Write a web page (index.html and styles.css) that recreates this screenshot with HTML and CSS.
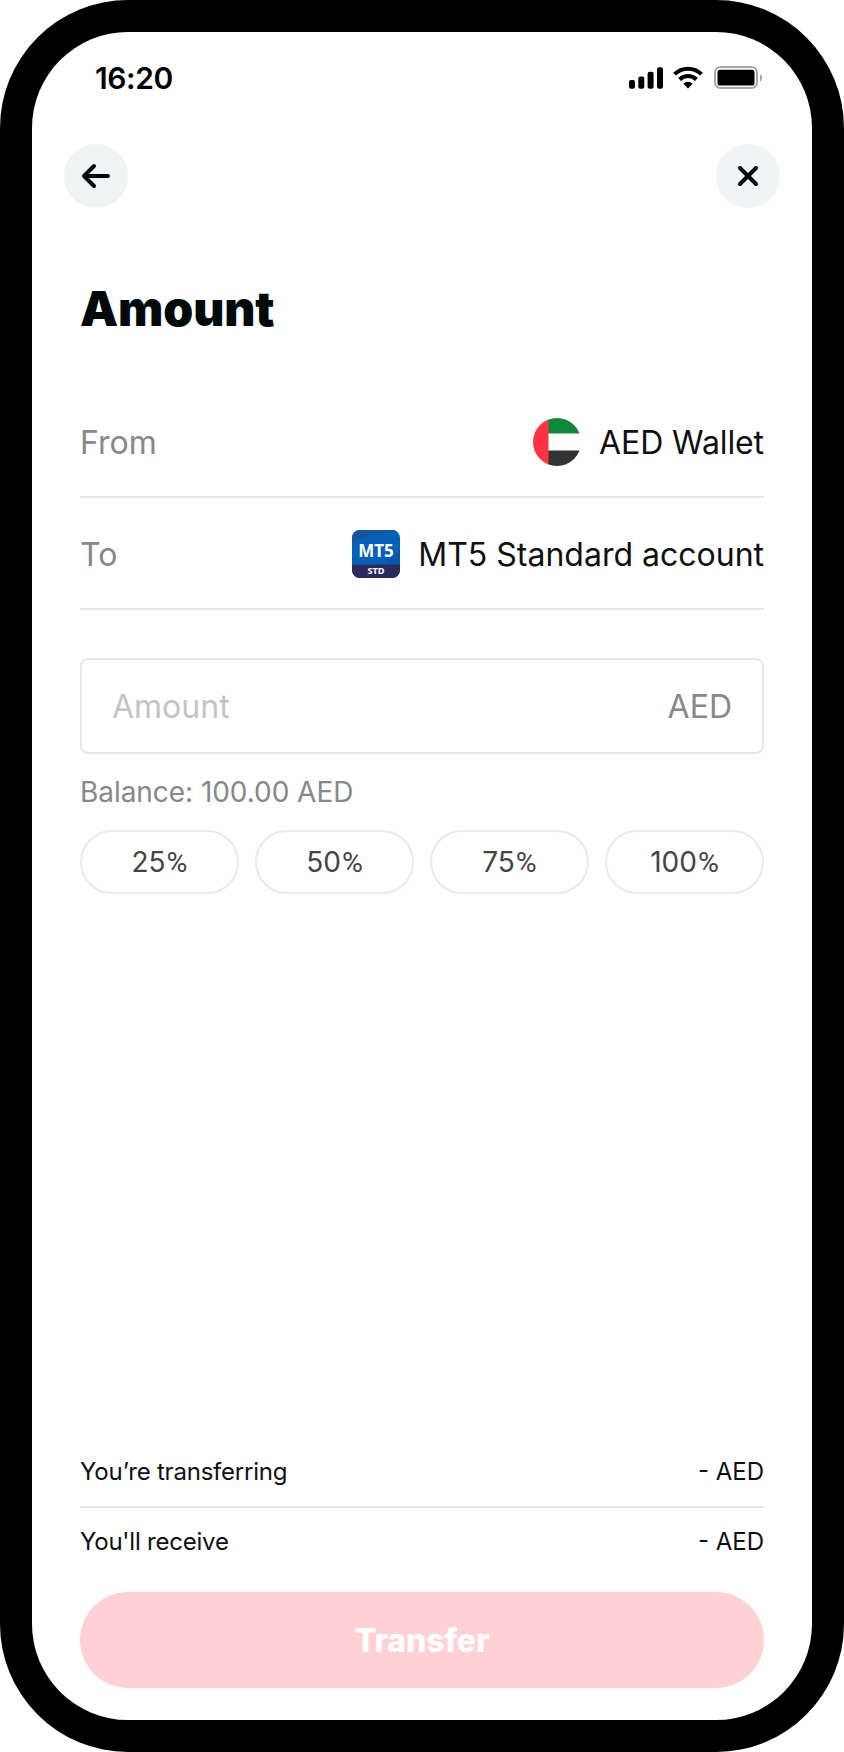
FILE: index.html
```html
<!DOCTYPE html>
<html lang="en">
<head>
<meta charset="utf-8">
<title>Amount</title>
<link rel="stylesheet" href="styles.css">
</head>
<body>
<div class="phone">
  <div class="screen">
    <header class="status">
      <span class="time">16:20</span>
      <div class="status-icons">
        <svg class="signal" width="34" height="22" viewBox="0 0 34 22">
          <rect x="0" y="13" width="6" height="8.700" rx="2"/>
          <rect x="9.300" y="9.500" width="6" height="12.200" rx="2"/>
          <rect x="18.600" y="4.700" width="6" height="17" rx="2"/>
          <rect x="28" y="0.300" width="6" height="21.400" rx="2"/>
        </svg>
        <svg class="wifi" width="30" height="23" viewBox="0 0 30 23">
          <g fill="none" stroke="#000" stroke-width="4">
            <path d="M1.500 8.200a19.200 19.200 0 0 1 27 0"/>
            <path d="M6.600 13.500a12 12 0 0 1 16.800 0"/>
          </g>
          <path d="M15 22.400l-4.700-4.600a6.700 6.700 0 0 1 9.400 0z"/>
        </svg>
        <svg class="battery" width="49" height="24" viewBox="0 0 49 24">
          <rect x="1" y="1" width="42" height="21" rx="5.500" fill="none" stroke="#a6a6a6" stroke-width="2"/>
          <rect x="3.500" y="3.800" width="37" height="15.700" rx="2.600"/>
          <path d="M46 8v7.500a4.300 4.300 0 0 0 0-7.500z" fill="#a6a6a6"/>
        </svg>
      </div>
    </header>
    <nav class="nav">
      <button class="round" aria-label="Back">
        <svg width="64" height="64" viewBox="0 0 64 64"><path d="M44 32H20.500M30 22L20 32l10 10"/></svg>
      </button>
      <button class="round" aria-label="Close">
        <svg width="64" height="64" viewBox="0 0 64 64"><path d="M24 24l16 16M40 24L24 40"/></svg>
      </button>
    </nav>
    <main class="content">
      <h1 class="title">Amount</h1>
      <div class="row">
        <span class="label">From</span>
        <span class="value">
          <svg width="48" height="48" viewBox="0 0 48 48">
            <defs><clipPath id="disc"><circle cx="24" cy="24" r="24"/></clipPath></defs>
            <g clip-path="url(#disc)">
              <path d="M0 0h48v48H0z" fill="#fff"/>
              <path d="M15 0h33v15.500H15z" fill="#11873b"/>
              <path d="M15 32.500h33V48H15z" fill="#333"/>
              <path d="M0 0h15.500v48H0z" fill="#ff3341"/>
            </g>
          </svg>
          <span class="from-name">AED Wallet</span>
        </span>
      </div>
      <div class="row">
        <span class="label">To</span>
        <span class="value">
          <svg width="48" height="48" viewBox="0 0 48 48">
            <defs><clipPath id="tile"><rect width="48" height="48" rx="8"/></clipPath></defs>
            <g clip-path="url(#tile)">
              <path d="M0 0h48v48H0z" fill="#0660b8"/>
              <path d="M0 0h48v1.500C28 2 12 5 0 13z" fill="#15569b"/>
              <path d="M48 18v17H27c10-4 17-9 21-17z" fill="#0757a8"/>
              <path d="M0 34.500h48V48H0z" fill="#2c2a5a"/>
            </g>
            <text class="logo-main" x="24" y="27.300" textLength="35.500" lengthAdjust="spacingAndGlyphs">MT5</text>
            <text class="logo-sub" x="24" y="44.300" textLength="17" lengthAdjust="spacingAndGlyphs">STD</text>
          </svg>
          <span class="to-name">MT5 Standard account</span>
        </span>
      </div>
      <div class="field"><span class="placeholder">Amount</span><span class="unit">AED</span></div>
      <p class="balance">Balance: 100.00 AED</p>
      <div class="chips">
        <button class="chip">25<span class="pct">%</span></button>
        <button class="chip">50<span class="pct">%</span></button>
        <button class="chip">75<span class="pct">%</span></button>
        <button class="chip">100<span class="pct">%</span></button>
      </div>
      <div class="summary">
        <div class="line"><span class="note">You’re transferring</span><span>- AED</span></div>
        <div class="line"><span class="note">You'll receive</span><span>- AED</span></div>
      </div>
      <button class="submit">Transfer</button>
    </main>
  </div>
</div>
</body>
</html>
```
FILE: styles.css
```css
* { box-sizing: border-box; }
body { margin: 0; background: #fff; font-family: Inter, "Liberation Sans", sans-serif; font-weight: 400; color: #101010; }
button { font: inherit; padding: 0; border: 0; }
svg { display: block; flex: none; }

.phone { width: 844px; height: 1752px; padding: 32px; background: #000; border-radius: 128px; }
.screen { height: 1688px; background: #fefefe; border-radius: 96px; display: flex; flex-direction: column; }

.status { height: 112px; padding: 0 49px 21px 63px; display: flex; justify-content: space-between; align-items: center; }
.time { font-size: 30px; font-weight: 600; line-height: 40px; letter-spacing: -0.4px; color: #000; }
.status-icons { display: flex; align-items: center; }
.wifi { margin-left: 10px; }
.battery { margin-left: 11px; }

.nav { height: 64px; padding: 0 32px; display: flex; justify-content: space-between; }
.round { width: 64px; height: 64px; border-radius: 50%; background: #f0f4f5; }
.round path { fill: none; stroke: #000a0a; stroke-width: 4; stroke-linecap: round; stroke-linejoin: round; }

.content { flex: 1; padding: 71px 48px 32px; display: flex; flex-direction: column; }
.title { margin: 0; height: 107px; font-size: 48px; font-weight: 900; line-height: 60px; letter-spacing: -0.1px; color: #000a0a; }
.row { height: 112px; padding-top: 2px; border-bottom: 2px solid #e8e8e8; display: flex; justify-content: space-between; align-items: center; font-size: 32px; line-height: 40px; }
.label, .from-name, .to-name { padding-top: 1px; }
.label, .unit { color: #888; }
.value { display: flex; align-items: center; gap: 18px; }
.from-name { letter-spacing: -0.1px; }
.logo-main, .logo-sub { fill: #fff; font-family: "Noto Sans", sans-serif; font-weight: 700; text-anchor: middle; }
.logo-main { font-size: 17.500px; }
.logo-sub { font-size: 8.500px; }

.field { height: 96px; margin-top: 48px; padding: 2px 30px 0; border: 2px solid #e8e8e8; border-radius: 8px; display: flex; justify-content: space-between; align-items: center; font-size: 32px; line-height: 40px; }
.placeholder { color: #c4c4c4; }
.balance { margin: 18px 0; font-size: 28px; line-height: 40px; letter-spacing: -0.05px; color: #888; }
.chips { display: grid; grid-template-columns: repeat(4, 1fr); gap: 16px; }
.chip { height: 64px; border: 2px solid #ebebeb; border-radius: 32px; background: transparent; font-size: 28px; line-height: 40px; color: #444; }
.pct { font-family: Roboto, sans-serif; font-size: 28.500px; margin-left: 1px; }

.summary { margin-top: auto; margin-bottom: 16px; font-size: 24px; line-height: 32px; }
.note { letter-spacing: -0.22px; }
.line { height: 70px; padding-top: 2px; display: flex; justify-content: space-between; align-items: center; }
.line + .line { padding-top: 0; border-top: 2px solid #e8e8e8; }
.submit { height: 96px; border-radius: 48px; background: #ffd0d4; color: #fff; font-size: 32px; font-weight: 800; letter-spacing: -0.1px; }
```
